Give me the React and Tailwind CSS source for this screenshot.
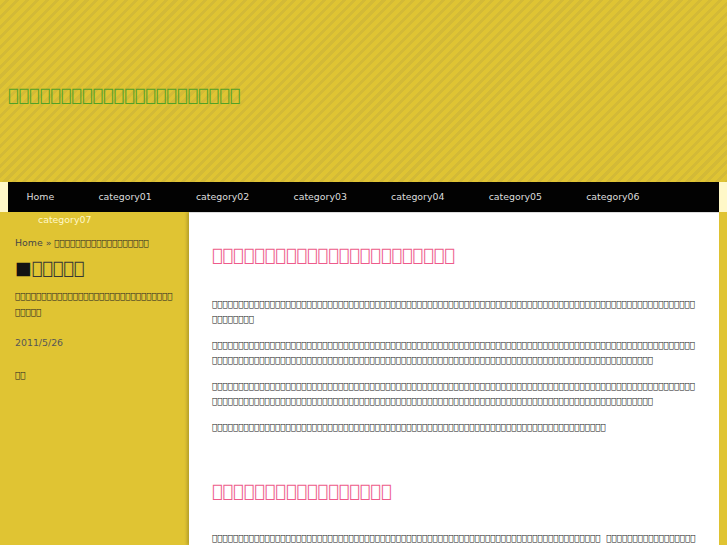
const box = (n) => '\uE000'.repeat(n);

const navItems = ['Home', 'category01', 'category02', 'category03', 'category04', 'category05', 'category06'];

const paragraphs = [100, 176, 176, 75];

export default function App() {
  return (
    <div className="w-[727px] h-[545px] overflow-hidden opacity-[0.99] bg-[#e0c431] font-['DejaVu_Sans',sans-serif] text-[#222]">
      <header className="h-[182px] flex items-center px-2 bg-[repeating-linear-gradient(135deg,#dfc431_0,#dfc431_4px,#d3ba35_4px,#d3ba35_7px)]">
        <h1 className="text-[17.6px] text-[#4fa024] pt-[8px]">{box(22)}</h1>
      </header>

      <div className="h-[30px] bg-[#fff8c8] px-2">
        <nav className="h-[30px] bg-black text-[9.4px] text-[#ddd]">
          <ul className="flex h-[30px] items-center pl-[18.5px]">
            {navItems.map((item) => (
              <li key={item} className="mr-[44.2px]">{item}</li>
            ))}
          </ul>
          <div className="pl-[30px] pt-[1px] text-[#fff8c8]">category07</div>
        </nav>
      </div>

      <div className="flex h-[333px]">
        <aside className="w-[189px] shrink-0 pl-[15px] pr-[14px] pt-[24px] text-[8.75px] text-[#222]">
          <p className="leading-[13px]"><span className="text-[9.4px] text-[#444]">Home »</span> {box(18)}</p>
          <h2 className="mt-[8px] text-[17.6px] leading-[20px] text-[#333]"><span className="text-[#111]">■</span>{box(5)}</h2>
          <p className="mt-[10px] leading-[16px] wrap-anywhere">{box(35)}</p>
          <p className="mt-[15px] text-[9.4px] leading-[16px] text-[#555]">2011/5/26</p>
          <p className="mt-[16px] leading-[16px]">{box(2)}</p>
        </aside>
        <main className="w-[530px] bg-white pl-[23px] pr-[20px] pt-[33px] border-t border-[#ddd] shadow-[-2px_0_3px_rgba(0,0,0,0.2)] text-[8.75px] text-[#111]">
          <h2 className="-mt-px text-[17.6px] leading-[20px] text-[#ee5a8a]">{box(23)}</h2>
          <div className="mt-[32px] flex flex-col gap-[11px]">
            {paragraphs.map((n, i) => (
              <p key={i} className="leading-[15px] wrap-anywhere">{box(n)}</p>
            ))}
          </div>
          <h2 className="mt-[46px] text-[17.6px] leading-[20px] text-[#ee5a8a]">{box(17)}</h2>
          <p className="mt-[30px] leading-[15px] whitespace-nowrap">{box(74)}{'\u00a0\u00a0'}{box(17)}</p>
        </main>
      </div>
    </div>
  );
}
